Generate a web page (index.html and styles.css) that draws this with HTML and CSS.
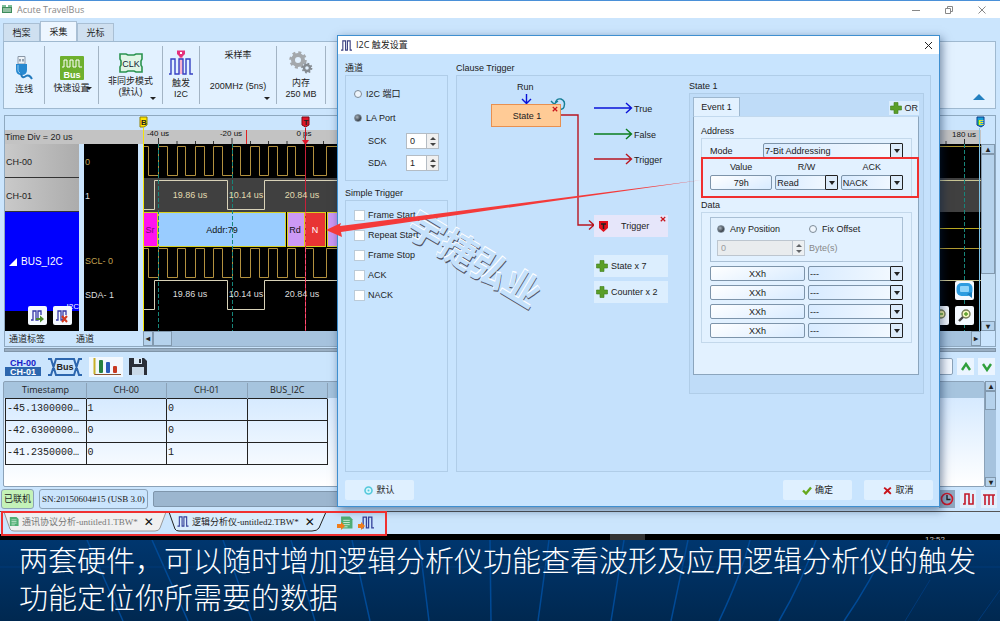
FILE: index.html
```
<!DOCTYPE html>
<html lang="zh-CN">
<head>
    <meta charset="UTF-8">
    <meta name="viewport" content="width=device-width, initial-scale=1.0">
    <link rel="stylesheet" href="styles.css">
    <title>Acute TravelBus</title>
</head>
<body>
    <!-- shared icon shapes -->
    <svg class="defs" width="0" height="0">
        <symbol id="pulse" viewBox="0 0 12 12"><path d="M0 11H2V1H5V11H7V1H10V11H12" fill="none" stroke="currentColor" stroke-width="1.2"/></symbol>
        <symbol id="plus" viewBox="0 0 12 12"><path d="M4 0.5H8V4H11.5V8H8V11.5H4V8H0.5V4H4Z" fill="#5a9e28" stroke="#3f7d1c" stroke-width="0.6"/></symbol>
        <symbol id="cross" viewBox="0 0 10 10"><path d="M2 1L5 3.6L8 1L9.4 2.4L6.6 5L9.4 8L8 9.4L5 6.6L2 9.4L0.6 8L3.4 5L0.6 2.4Z" fill="#c8141c"/></symbol>
        <symbol id="doc" viewBox="0 0 12 12"><path d="M1 0.5H9L11.5 3V11.5H1Z" fill="#4fae74"/><path d="M3 4H9M3 6H9M3 8H9M3 10H7" stroke="#d9f2e0" stroke-width="0.8"/></symbol>
    </svg>

    <div class="app">
        <header class="titlebar">
            <svg class="app-icon" width="12" height="9" viewBox="0 0 12 9"><rect x="1" y="2" width="10" height="6" fill="#3d8c5c"/><path d="M1 2V0H5V2M7 2V0H11V2" fill="#7fbf9a"/><path d="M2 4H10M2 6H10" stroke="#e6f5ea"/></svg>
            <span>Acute TravelBus</span>
            <div class="window-btns">
                <svg width="8" height="8"><path d="M0 4.5H8" stroke="#888"/></svg>
                <svg width="8" height="8" fill="none" stroke="#888"><path d="M0.5 2.5H5.5V7.5H0.5ZM2.5 2.5V0.5H7.5V5.5H5.5"/></svg>
                <svg width="8" height="8"><path d="M0.5 0.5L7.5 7.5M7.5 0.5L0.5 7.5" stroke="#888"/></svg>
            </div>
        </header>

        <nav class="ribbon-tabs">
            <button>档案</button>
            <button class="active">采集</button>
            <button>光标</button>
        </nav>
        <div class="ribbon">
            <button class="tool connect">
                <svg width="18" height="25" viewBox="0 0 18 25"><path d="M3 0.5H10V8H3Z" fill="#eef3f8" stroke="#8a98a8"/><path d="M5 3V5.5M8 3V5.5" stroke="#56697d" stroke-width="1.2"/><path d="M1 8H12V14Q12 19 6.5 19Q1 19 1 14Z" fill="#2688d0"/><path d="M3 9V14Q3 16 5 17" stroke="#93cbf1" fill="none"/><path d="M6 18Q7 23 11 20Q14 18 17 23" fill="none" stroke="#2279bd" stroke-width="2"/></svg>
                <span>连线</span>
            </button>
            <button class="tool quick drop">
                <svg width="24" height="24" viewBox="0 0 24 24"><rect width="24" height="24" rx="1" fill="#6eb02e"/><path d="M2 11H4V4H7V11H10V4H13V11H16V4H19V11H22" fill="none" stroke="#fff"/><text x="12" y="22" text-anchor="middle" font-size="9" font-weight="bold" fill="#fff">Bus</text></svg>
                <span>快速设置</span>
            </button>
            <button class="tool clock drop">
                <svg width="24" height="20" viewBox="0 0 24 20"><path d="M1 1H7L9 2H15L17 1H23V6L22 8V12L23 14V19H17L15 18H9L7 19H1V14L2 12V8L1 6Z" fill="#e0f5e6" stroke="#2b9350" stroke-width="1.6"/><text x="12" y="14" text-anchor="middle" font-size="9" fill="#123">CLK</text></svg>
                <span>非同步模式<br>(默认)</span>
            </button>
            <button class="tool trig">
                <svg width="24" height="25" viewBox="0 0 24 25"><rect x="10" y="6" width="4" height="18" fill="#f7b3cf"/><path d="M0 24H2V9H6V24H10V9H14V24H17V9H21V24H24" fill="none" stroke="#3742c4" stroke-width="1.4"/><path d="M8 0.5H16V4L12 8L8 4Z" fill="#e52f7b"/><rect x="11" y="2" width="2" height="2" fill="#fff"/></svg>
                <span>触发<br>I2C</span>
            </button>
            <button class="tool rate drop"><span>采样率</span><span>200MHz (5ns)</span></button>
            <button class="tool memory">
                <svg width="24" height="24" viewBox="0 0 24 24" fill="none"><circle cx="9" cy="9" r="5" stroke="#a4a8ac" stroke-width="4"/><circle cx="9" cy="9" r="7.5" stroke="#a4a8ac" stroke-width="2.5" stroke-dasharray="3 2.9"/><circle cx="18" cy="17" r="3" stroke="#858b91" stroke-width="2.4"/><circle cx="18" cy="17" r="4.6" stroke="#858b91" stroke-width="1.6" stroke-dasharray="1.8 1.8"/></svg>
                <span>内存<br>250 MB</span>
            </button>
            <button class="fold" aria-label="收起"></button>
        </div>

        <section class="wave">
            <div class="wave-side">
                <div class="time-div">Time Div = 20 us</div>
                <div class="channels">
                    <div class="names">
                        <div class="ch">CH-00</div>
                        <div class="ch">CH-01</div>
                        <div class="bus"><i></i>BUS_I2C<small>I2C</small></div>
                        <div class="name-btns">
                            <button aria-label="添加"><svg width="15" height="14" viewBox="0 0 15 14"><path d="M1 11H3V2H6V11H8V2H11V6" fill="none" stroke="#3638a8" stroke-width="1.3"/><path d="M6 9H10V6.500L14 10L10 13.500V11H6Z" fill="#4c8b2b"/></svg></button>
                            <button aria-label="删除"><svg width="15" height="14" viewBox="0 0 15 14"><path d="M1 11H3V2H6V11H8V2H11V6" fill="none" stroke="#3638a8" stroke-width="1.3"/><path d="M7 7L12 13M12 7L7 13" stroke="#d33a20" stroke-width="2"/></svg></button>
                        </div>
                    </div>
                    <div class="values">
                        <span class="gold">0</span>
                        <span>1</span>
                        <span></span>
                        <span class="scl">SCL- 0</span>
                        <span>SDA- 1</span>
                    </div>
                </div>
                <div class="side-foot"><span>通道标签</span><span>通道</span></div>
            </div>
            <div class="wave-main">
                <svg class="ruler" width="100%" height="28">
                    <rect y="14" width="100%" height="14" fill="#c3c3c3"/>
                    <path d="M15.500 22V28M34 25V28M52.500 25V28M70.500 25V28M89 22V28M107.500 25V28M125.500 25V28M144 25V28M162 22V28M180.500 25V28M803 25V28M821.500 23V28" stroke="#333"/>
                    <path d="M103.500 14V28" stroke="#e02020"/>
                    <g font-size="8" text-anchor="middle" fill="#111"><text x="15" y="20">-40 us</text><text x="88" y="20">-20 us</text><text x="161" y="20">0 ps</text><text x="821" y="21">180 us</text></g>
                </svg>
                <svg class="traces" width="100%" height="187">
                    <rect width="100%" height="187"/>
                    <rect y="34" width="100%" height="34" fill="#404040"/>
                    <path d="M190 2.500H1000M190 104.500H1000" stroke="#b09a32"/>
                    <path d="M190 36.500H1000M190 136.500H1000" stroke="#c9c594"/>
                    <path d="M190 84.500H1000" stroke="#b9a820"/>
                    <g fill="none" stroke="#b3913f">
                        <path id="scl" d="M0 2.500H5.500V31.500H15.500V2.500H24.500V31.500H34.500V2.500H42.500V31.500H52.500V2.500H61.500V31.500H70.500V2.500H79.500V31.500H89.500V2.500H97.500V31.500H107.500V2.500H116.500V31.500H125.500V2.500H134.500V31.500H144.500V2.500H152.500V31.500H162.500V2.500H170.500V31.500H183.500V2.500H192"/>
                        <use href="#scl" y="102"/>
                    </g>
                    <g fill="none" stroke="#d8d2b8">
                        <path id="sda" d="M0 65.500H11.500V36.500H84.500V65.500H121.500V36.500H200"/>
                        <use href="#sda" y="100"/>
                    </g>
                    <g stroke="#d8d020">
                        <rect x="0.500" y="68.500" width="14" height="34" fill="#ff12ee"/>
                        <rect x="15.500" y="68.500" width="127" height="34" fill="#99ccff"/>
                        <rect x="144.500" y="68.500" width="17" height="34" fill="#cc99f5"/>
                        <rect x="162.500" y="68.500" width="20" height="34" fill="#e83434"/>
                        <rect x="184.500" y="68.500" width="20" height="34" fill="#cc99f5"/>
                    </g>
                    <path d="M15.500 0V187M89.500 0V187M821.500 0V187" stroke="#17857a" stroke-dasharray="4 2"/>
                    <path d="M162.500 0V187" stroke="#c8203a"/>
                    <path d="M162.500 68V187" stroke="#ff4f75" stroke-dasharray="4 2"/>
                    <g font-size="9" text-anchor="middle" fill="#e2dcb0"><text x="47" y="54">19.86 us</text><text x="103" y="54">10.14 us</text><text x="159" y="54">20.84 us</text></g>
                    <g font-size="9" text-anchor="middle" fill="#ddd"><text x="47" y="153">19.86 us</text><text x="103" y="153">10.14 us</text><text x="159" y="153">20.84 us</text></g>
                    <g font-size="9" text-anchor="middle" fill="#111"><text x="7" y="89" fill="#7a0873">Sr</text><text x="79" y="89">Addr:79</text><text x="152" y="89">Rd</text><text x="172" y="89" fill="#fff">N</text></g>
                </svg>
                <!-- cursors drawn through ruler and traces -->
                <svg class="cursors" width="100%" height="215">
                    <path d="M0.500 12V215" stroke="#f5e50a"/>
                    <path d="M-3 1H4V9L1 11H-3Z" fill="#ffe600" stroke="#8f7f00"/>
                    <path d="M162.500 12V34" stroke="#d01020"/>
                    <path d="M159 1H166V9L162.500 11L159 9Z" fill="#e01428" stroke="#7c0a16"/>
                    <path d="M159 24H166L162.500 29Z" fill="#e01428"/>
                    <path d="M836.500 12V215" stroke="#7cc4e8"/>
                    <path d="M834 1H841V9L838 11L834 9Z" fill="#1aa0d8" stroke="#0b3a88"/>
                    <g font-size="8" font-weight="bold" text-anchor="middle" fill="#222"><text x="1" y="9">B</text><text x="163" y="9">T</text><text x="838" y="9" fill="#ee0">E</text></g>
                </svg>
                <div class="map-btns">
                    <button aria-label="平移"><svg width="17" height="17" viewBox="0 0 17 17"><rect x="0.500" y="1" width="16" height="13" rx="5" fill="#2d9ce0"/><rect x="4" y="4" width="9" height="6" rx="1" fill="#8fd4fa"/><path d="M11 12L16 16V10Z" fill="#187dbd"/></svg></button>
                    <div>
                        <button aria-label="缩小"><svg width="15" height="15" viewBox="0 0 15 15"><circle cx="9" cy="6" r="4" fill="#f7f3a0" stroke="#777c58" stroke-width="1.4"/><path d="M6 9L2 13" stroke="#555" stroke-width="2.4"/><path d="M7 6H11" stroke="#5a9e28" stroke-width="1.4"/></svg></button>
                        <button aria-label="放大"><svg width="15" height="15" viewBox="0 0 15 15"><circle cx="9" cy="6" r="4" fill="#f4f7c0" stroke="#777c58" stroke-width="1.4"/><path d="M6 9L2 13" stroke="#444" stroke-width="2.4"/><path d="M7 6H11M9 4V8" stroke="#5a9e28" stroke-width="1.4"/></svg></button>
                    </div>
                </div>
                <div class="h-scroll"><b>◂</b><i></i><b class="end">▸</b></div>
            </div>
            <div class="v-scroll wave-scroll"><b>▴</b><i></i><b>▾</b></div>
        </section>
        <div class="splitter"></div>

        <div class="toolbar">
            <button aria-label="CH-00 CH-01"><svg width="36" height="20"><text x="18" y="9" text-anchor="middle" font-size="9" font-weight="bold" fill="#1620c8">CH-00</text><rect y="10" width="36" height="9" fill="#2c66ae"/><text x="18" y="18" text-anchor="middle" font-size="9" font-weight="bold" fill="#fff">CH-01</text></svg></button>
            <button aria-label="Bus"><svg width="36" height="20"><path d="M1 2H4L9 18H27L32 2H35M1 18H4L9 2H27L32 18H35" fill="none" stroke="#2c66ae" stroke-width="2"/><text x="18" y="13" text-anchor="middle" font-size="9" font-weight="bold" fill="#222">Bus</text></svg></button>
            <button class="chart" aria-label="统计"><svg width="34" height="20"><path d="M5.500 1V17.500H32" fill="none" stroke="#8a5230"/><path d="M5.500 1V17" stroke="#c8b02a" stroke-width="2"/><rect x="10" y="3" width="4" height="13" rx="1" fill="#27823f"/><rect x="17" y="5" width="4" height="11" rx="1" fill="#2a5cb8"/><rect x="24" y="9" width="4" height="7" rx="1" fill="#c83a22"/></svg></button>
            <button aria-label="保存"><svg width="18" height="19"><path d="M0 1H15L18 4V18H0Z" fill="#2b2f38"/><rect x="5" y="1" width="8" height="6" fill="#d9e8f5"/><rect x="10" y="2" width="2" height="4" fill="#2b2f38"/><rect x="3" y="10" width="12" height="8" fill="#c9d9e8"/></svg></button>
            <div class="find">
                <input type="text" aria-label="搜索">
                <button class="step" aria-label="上一个"><svg width="12" height="10"><path d="M2 8L6 2L10 8" fill="none" stroke="#2fa03c" stroke-width="2.4"/></svg></button>
                <button class="step" aria-label="下一个"><svg width="12" height="10"><path d="M2 2L6 8L10 2" fill="none" stroke="#2fa03c" stroke-width="2.4"/></svg></button>
            </div>
        </div>

        <div class="report">
            <div class="report-box">
                <table>
                    <thead><tr><th>Timestamp</th><th>CH-00</th><th>CH-01</th><th>BUS_I2C</th></tr></thead>
                    <tbody>
                        <tr><td>-45.1300000…</td><td>1</td><td>0</td><td></td></tr>
                        <tr><td>-42.6300000…</td><td>0</td><td>0</td><td></td></tr>
                        <tr><td>-41.2350000…</td><td>0</td><td>1</td><td></td></tr>
                    </tbody>
                </table>
            </div>
            <div class="v-scroll report-scroll"><b>▴</b><i></i><b>▾</b></div>
        </div>

        <div class="status">
            <span class="online">已联机</span>
            <span class="serial">SN:20150604#15 (USB 3.0)</span>
            <span class="progress"></span>
            <button class="pressed" aria-label="时间"><svg width="14" height="14"><circle cx="7" cy="7" r="5.500" fill="none" stroke="#d01828" stroke-width="1.6"/><path d="M7 3V7.500H10.500" fill="none" stroke="#222" stroke-width="1.4"/></svg></button>
            <button aria-label="波形"><svg width="14" height="14"><path d="M2 12H4V2H8V12H12V2" fill="none" stroke="#c21a28" stroke-width="1.6"/></svg></button>
            <button aria-label="触发点"><svg width="14" height="14"><path d="M3 3V13M7 3V13M11 3V13M1 3H13" stroke="#c21a28" stroke-width="1.6"/></svg></button>
        </div>

        <div class="doc-tabs">
            <svg class="tab-shapes" width="400" height="22"><path d="M4 0L10 17Q11 19 14 19H155Q159 19 160 16L166 0" fill="#f0f0f0" stroke="#999"/><path d="M169 0L175 17Q176 19 179 19H312Q317 19 319 16L326 0" fill="#d9ecfc" stroke="#222"/></svg>
            <button class="doc-tab dim"><svg width="10" height="11"><use href="#doc"/></svg>通讯协议分析-untitled1.TBW*<b>✕</b></button>
            <button class="doc-tab"><svg width="12" height="11" color="#34409a"><use href="#pulse"/></svg>逻辑分析仪-untitled2.TBW*<b>✕</b></button>
            <button class="new-doc" aria-label="新建协议分析"><svg width="16" height="16"><svg x="3" y="1" width="13" height="13"><use href="#doc"/></svg><path d="M0 9H4V7L8 11L4 15V13H0Z" fill="#ef7d1b"/></svg></button>
            <button class="new-doc" aria-label="新建逻辑分析"><svg width="16" height="16" color="#34409a"><svg x="3" y="0" width="13" height="15"><use href="#pulse"/></svg><path d="M0 9H3V7L7 11L3 15V13H0Z" fill="#ef7d1b"/></svg></button>
        </div>
    </div>

    <div class="dialog" role="dialog" aria-label="I2C 触发设置">
        <div class="dialog-title">
            <svg width="11" height="11" color="#3a3f80"><use href="#pulse"/></svg>
            <span>I2C 触发设置</span>
            <button aria-label="关闭"><svg width="9" height="9"><path d="M1 1L8 8M8 1L1 8" stroke="#222"/></svg></button>
        </div>
        <div class="dialog-main">
            <div class="left-col">
                <h3>通道</h3>
                <div class="group port">
                    <label><input type="radio" name="port">I2C 端口</label>
                    <label><input type="radio" name="port" checked>LA Port</label>
                    <label class="pin">SCK<span class="spin"><input type="text" value="0"><i></i></span></label>
                    <label class="pin">SDA<span class="spin"><input type="text" value="1"><i></i></span></label>
                </div>
                <h3>Simple Trigger</h3>
                <div class="group simple">
                    <label><input type="checkbox">Frame Start</label>
                    <label><input type="checkbox">Repeat Start</label>
                    <label><input type="checkbox">Frame Stop</label>
                    <label><input type="checkbox">ACK</label>
                    <label><input type="checkbox">NACK</label>
                </div>
            </div>
            <div class="clause-col">
                <h3>Clause Trigger</h3>
                <div class="group clause">
                    <div class="canvas">
                        <svg class="flow" width="234" height="395" fill="none">
                            <path d="M69.500 18V27M65 23L69.500 27.500L74 23" stroke="#0a12d8" stroke-width="1.4"/>
                            <path d="M94 25L97 28L101 25M98 28Q99 22 104 23Q109 25 107 31Q106 34 103 33" stroke="#177f96" stroke-width="1.4"/>
                            <path d="M104 39H121V149H136M132 144.500L137 149L132 153.500" stroke="#b81620" stroke-width="1.4"/>
                            <path d="M137 32H174M169 27L174.500 32L169 37" stroke="#0a12d8" stroke-width="1.4"/>
                            <path d="M137 58H174M169 53L174.500 58L169 63" stroke="#0b7d1c" stroke-width="1.4"/>
                            <path d="M137 83H174M169 78L174.500 83L169 88" stroke="#b81620" stroke-width="1.4"/>
                            <g font-size="9" fill="#222"><text x="60" y="14">Run</text><text x="177" y="36">True</text><text x="177" y="62">False</text><text x="177" y="87">Trigger</text></g>
                        </svg>
                        <button class="node state">State 1<svg width="6" height="6"><use href="#cross"/></svg></button>
                        <button class="node end"><svg width="9" height="12"><path d="M0 1H9V8L4.500 12L0 8Z" fill="#e0101c"/><path d="M2 4H7M4.500 4V9" stroke="#222" stroke-width="1.5"/></svg>Trigger<svg class="close" width="6" height="6"><use href="#cross"/></svg></button>
                        <button class="node add-state"><svg width="12" height="12"><use href="#plus"/></svg>State x 7</button>
                        <button class="node add-counter"><svg width="12" height="12"><use href="#plus"/></svg>Counter x 2</button>
                    </div>
                    <div class="state-panel">
                        <h3>State 1</h3>
                        <div class="group events">
                            <div class="event-tabs">
                                <button class="event-tab">Event 1</button>
                                <button class="or"><svg width="12" height="12"><use href="#plus"/></svg>OR</button>
                            </div>
                            <div class="event">
                                <h3>Address</h3>
                                <div class="group address">
                                    <label class="mode">Mode<span class="select"><select><option>7-Bit Addressing</option></select></span></label>
                                    <div class="fields">
                                        <label>Value<input class="field" type="text" value="79h"></label>
                                        <label>R/W<span class="select"><select><option>Read</option></select></span></label>
                                        <label>ACK<span class="select"><select><option>NACK</option></select></span></label>
                                    </div>
                                </div>
                                <h3>Data</h3>
                                <div class="group data">
                                    <div class="position">
                                        <label><input type="radio" name="pos" checked>Any Position</label>
                                        <label><input type="radio" name="pos">Fix Offset</label>
                                        <span class="spin off"><input type="text" value="0" aria-label="Byte(s)" disabled><i></i></span>
                                        <span class="off">Byte(s)</span>
                                    </div>
                                    <div class="bytes">
                                        <input class="field" type="text" value="XXh" aria-label="Byte 1"><span class="select"><select aria-label="Byte 1"><option>---</option></select></span>
                                        <input class="field" type="text" value="XXh" aria-label="Byte 2"><span class="select"><select aria-label="Byte 2"><option>---</option></select></span>
                                        <input class="field" type="text" value="XXh" aria-label="Byte 3"><span class="select"><select aria-label="Byte 3"><option>---</option></select></span>
                                        <input class="field" type="text" value="XXh" aria-label="Byte 4"><span class="select"><select aria-label="Byte 4"><option>---</option></select></span>
                                    </div>
                                </div>
                            </div>
                        </div>
                    </div>
                </div>
            </div>
        </div>
        <div class="dialog-foot">
            <button><svg width="9" height="9"><circle cx="4.500" cy="4.500" r="3.500" fill="#d4f6fb" stroke="#55c8dc" stroke-width="1.6"/><circle cx="4.500" cy="4.500" r="1" fill="#55c8dc"/></svg>默认</button>
            <button class="ok"><svg width="10" height="9"><path d="M1 4.500L4 7.500L9 1.500" fill="none" stroke="#66a81e" stroke-width="2.4"/></svg>确定</button>
            <button><svg width="9" height="9"><use href="#cross"/></svg>取消</button>
        </div>
    </div>

    <div class="taskbar"><i></i><span>12:52</span></div>

    <div class="caption">
        <svg width="1000" height="81" fill="none" stroke="#004a96" stroke-width="1.5">
            <path d="M87 0L123 81M152 0L188 81M223 0L252 81M291 0L315 81M352 0L370 81M419 0L429 81M490 0L491 81M549 0L538 81M624 0L611 81M688 0L671 81M750 0Q741 35 719 81M816 0Q803 40 779 81M890 0Q872 40 844 81"/>
            <path d="M930 40L905 81M1000 50L978 81M0 27H1000" stroke="#003a78" stroke-width="1"/>
        </svg>
        <p>两套硬件，可以随时增加逻辑分析仪功能查看波形及应用逻辑分析仪的触发<br>功能定位你所需要的数据</p>
    </div>

    <!-- callouts on top of everything -->
    <svg class="notes" width="1000" height="621">
        <g fill="none" stroke="#f03030" stroke-width="2"><rect x="702" y="158" width="216" height="39"/><rect x="2" y="512" width="384" height="23"/></g>
        <text class="stamp" x="474" y="273" transform="rotate(31 474 260)">宇捷弘业</text>
        <path d="M702 180L340 226L341 223L326 230L342 237L341 232L540 203Z" fill="#f43a3a"/>
    </svg>
</body>
</html>
```
FILE: styles.css
```
*, *::before, *::after{
    box-sizing: border-box;
}

body{
    margin: 0;
    min-height: 100vh;
    display: flex;
    flex-direction: column;
    position: relative;
    overflow: hidden;
    font-family: "Liberation Sans", "Noto Sans CJK SC", sans-serif;
    font-size: 9px;
    line-height: 12px;
    color: #222;
    background-color: #002a56;
}

button, input, select{
    font: inherit;
    color: inherit;
    margin: 0;
    padding: 0;
    border: none;
    background: none;
}

svg{
    display: block;
    flex: none;
}

.defs{
    position: absolute;
}

h3{
    margin: 0;
    font-size: 9px;
    font-weight: normal;
    line-height: 12px;
}

/* main window */
.app{
    display: flex;
    flex-direction: column;
    background-color: #cbe5fd;
    border-top: 1px solid #4a90d8;
}

.titlebar{
    height: 17px;
    display: flex;
    align-items: center;
    gap: 4px;
    padding-left: 1px;
    background-color: #fff;
    color: #888;
    font-family: "Open Sans", sans-serif;
}

.window-btns{
    margin-left: auto;
    display: flex;
    gap: 25px;
    padding-right: 14px;
}

.ribbon-tabs{
    display: flex;
    align-items: flex-end;
    height: 23px;
    padding-left: 3px;
}

.ribbon-tabs button{
    width: 37px;
    height: 18px;
    border: 1px solid #a9bfd4;
    border-bottom: none;
    background-color: #cfe0f0;
}

.ribbon-tabs .active{
    height: 20px;
    background-color: #edf6ff;
}

.ribbon{
    display: flex;
    height: 68px;
    margin: 0 4px 0 3px;
    padding: 4px 0;
    border: 1px solid #9fb9d0;
    background-color: #e2f1ff;
}

.tool{
    position: relative;
    display: flex;
    flex-direction: column;
    align-items: center;
    justify-content: center;
    gap: 3px;
    border-right: 1px solid #a3b4c4;
    line-height: 11px;
}

.connect{ width: 41px; }
.quick{ width: 54px; }
.clock{ width: 64px; }
.trig{ width: 37px; }
.rate{ width: 77px; gap: 20px; padding-bottom: 8px; }
.memory{ width: 49px; }

.drop::after, .fold::after{
    content: "";
    position: absolute;
    right: 6px;
    bottom: 4px;
    border: 3px solid transparent;
    border-top-color: #222;
    border-bottom: none;
}

.quick::after{
    bottom: 14px;
}

.fold{
    position: relative;
    width: 24px;
    margin-left: auto;
}

.fold::after{
    border: 6px solid transparent;
    border-bottom-color: #2380c0;
    border-top: none;
    right: 10px;
}

/* waveform */
.wave{
    display: flex;
    margin: 6px 4px 0;
    border: 1px solid #8fa9c0;
}

.wave-side{
    width: 138px;
    padding-top: 14px;
}

.time-div{
    height: 14px;
    line-height: 15px;
    background-color: #c3c3c3;
}

.channels{
    display: flex;
    gap: 5px;
    height: 187px;
}

.names{
    width: 74px;
    position: relative;
    background-color: #000;
}

.ch{
    height: 34px;
    line-height: 36px;
    padding-left: 1px;
    border-bottom: 1px solid #333;
    background: linear-gradient(90deg, #c9c9c9, #acacac);
}

.bus{
    height: 99px;
    display: flex;
    align-items: center;
    gap: 4px;
    padding-left: 4px;
    position: relative;
    background-color: #0000fe;
    color: #fff;
    font-size: 10px;
}

.bus i{
    border: 4px solid transparent;
    border-right-color: #fff;
    border-bottom-color: #fff;
}

.bus small{
    position: absolute;
    right: 0;
    bottom: 0;
    font-size: 8px;
    line-height: 9px;
}

.name-btns{
    position: absolute;
    left: 23px;
    bottom: 6px;
    display: flex;
    gap: 6px;
}

.name-btns button, .map-btns button{
    width: 19px;
    height: 19px;
    display: flex;
    align-items: center;
    justify-content: center;
    border-radius: 2px;
    background-color: #f4f9ff;
}

.values{
    width: 54px;
    padding-left: 1px;
    background-color: #000;
    color: #ddd;
}

.values span{
    display: block;
    height: 34px;
    line-height: 36px;
}

.values .gold, .values .scl{
    color: #c0a050;
}

.values .scl{
    height: 31px;
    line-height: 31px;
}

.side-foot{
    height: 15px;
    display: flex;
    padding-left: 4px;
    line-height: 16px;
}

.side-foot span{
    width: 78px;
}

.wave-main{
    flex: 1;
    min-width: 0;
    position: relative;
}

.cursors{
    position: absolute;
    top: 0;
    left: 0;
    overflow: visible;
}

.map-btns{
    position: absolute;
    right: 7px;
    bottom: 21px;
    display: flex;
    flex-direction: column;
    align-items: flex-end;
    gap: 6px;
}

.map-btns div{
    display: flex;
    gap: 6px;
}

.h-scroll{
    height: 15px;
    display: flex;
    background-color: #a6c3de;
}

.h-scroll b, .h-scroll i, .v-scroll b, .v-scroll i{
    border: 1px solid #8299ae;
    background-color: #b5d2ec;
    font-size: 8px;
    line-height: 9px;
    text-align: center;
}

.h-scroll b{
    width: 10px;
    line-height: 13px;
}

.h-scroll i{
    width: 19px;
}

.h-scroll .end{
    margin-left: auto;
}

.v-scroll{
    width: 14px;
    display: flex;
    flex-direction: column;
    background-color: #c4def4;
}

.v-scroll b{
    height: 10px;
}

.v-scroll b:last-child{
    margin-top: auto;
}

.wave-scroll{
    margin: 28px 0 15px;
}

.wave-scroll i{
    height: 120px;
}

.splitter{
    height: 4px;
    margin: 1px 4px 0;
    background-color: #9aafc3;
    border: 1px solid #8095a8;
}

.toolbar{
    display: flex;
    align-items: center;
    gap: 6px;
    height: 29px;
    padding: 0 5px;
}

.chart{
    background-color: #f2f8fe;
}

.find{
    display: flex;
    gap: 4px;
    margin-left: auto;
}

.find input{
    width: 200px;
    height: 17px;
    border: 1px solid #8ba2b8;
    border-radius: 2px;
    background-color: #f2f8ff;
}

.step{
    width: 17px;
    height: 17px;
    display: flex;
    align-items: center;
    justify-content: center;
    background-color: #ebf5ff;
}

.report{
    display: flex;
    height: 106px;
    margin: 0 4px 0 3px;
}

.report-box{
    flex: 1;
    border: 1px solid #8ba2b8;
    border-radius: 2px;
    padding: 1px;
    background: linear-gradient(#a6c4de 16px, #d6eaff 16px, #fff);
}

.report-box table{
    width: 323px;
    border-collapse: collapse;
    table-layout: fixed;
}

th{
    height: 15px;
    padding: 0;
    font-weight: normal;
    font-family: "Open Sans", sans-serif;
    border-right: 1px solid #8ba2b8;
}

td{
    height: 22px;
    padding: 0 1px;
    border: 1px solid #222;
    font: 10px/12px "Liberation Mono", monospace;
}

.report-scroll{
    width: 11px;
    background-color: #a6c3de;
}

.report-scroll i{
    height: 19px;
}

.status{
    display: flex;
    align-items: center;
    gap: 5px;
    height: 25px;
    padding: 0 3px 0 1px;
    border-bottom: 1px solid #555;
}

.online, .serial{
    height: 20px;
    padding: 0 2px;
    border: 1px solid #8ba2b8;
    border-radius: 3px;
    line-height: 18px;
    font-family: "Liberation Serif", "Noto Sans CJK SC", serif;
}

.online{
    background-color: #c4f2b8;
}

.progress{
    flex: 1;
    height: 16px;
    border: 1px solid #7f96ac;
    border-radius: 2px;
    background-color: #9cb6cf;
}

.status button{
    width: 16px;
    height: 18px;
    display: flex;
    align-items: center;
    justify-content: center;
    background-color: #e2f0fc;
}

.status .pressed{
    background-color: #8fa8c0;
}

.doc-tabs{
    display: flex;
    height: 22px;
    padding-left: 9px;
    position: relative;
    font-family: "Liberation Serif", "Noto Sans CJK SC", serif;
}

.tab-shapes{
    position: absolute;
    left: 0;
    top: 0;
}

.doc-tab{
    position: relative;
    width: 168px;
    height: 19px;
    display: flex;
    align-items: center;
    gap: 3px;
    white-space: nowrap;
}

.doc-tab b{
    margin-left: 3px;
    font: bold 12px/12px "DejaVu Sans", sans-serif;
    color: #111;
}

.dim{
    color: #777;
}

.new-doc{
    width: 21px;
}

.new-doc:nth-last-child(2){
    margin-left: -8px;
}

/* trigger dialog */
.dialog{
    position: absolute;
    left: 337px;
    top: 35px;
    width: 603px;
    height: 472px;
    display: flex;
    flex-direction: column;
    border: 1px solid #3f8fd0;
    background-color: #c8e4fe;
    box-shadow: 2px 3px 9px rgba(0, 30, 70, 0.5);
}

.dialog-title{
    height: 18px;
    display: flex;
    align-items: center;
    gap: 4px;
    padding: 0 6px 0 3px;
    background-color: #fff;
    font-family: "Open Sans", "Noto Sans CJK SC", sans-serif;
}

.dialog-title button{
    margin-left: auto;
}

.dialog-main{
    flex: 1;
    display: flex;
    gap: 8px;
    padding: 8px 8px 0 7px;
}

.left-col{
    width: 103px;
    display: flex;
    flex-direction: column;
}

.clause-col{
    flex: 1;
    display: flex;
    flex-direction: column;
}

.group{
    margin-top: 1px;
    border: 1px solid #b0cde8;
}

.group label{
    display: flex;
    align-items: center;
}

.port{
    padding: 6px 8px;
    margin-bottom: 6px;
}

.port label{
    height: 24px;
    gap: 4px;
}

.port .pin{
    height: 22px;
    padding-left: 14px;
    justify-content: space-between;
}

.simple{
    flex: 1;
    padding: 4px 8px;
}

.simple label{
    height: 20px;
    gap: 3px;
}

input[type="radio"]{
    appearance: none;
    width: 8px;
    height: 8px;
    border: 1px solid #7d8b98;
    border-radius: 50%;
    background-color: #eef5fc;
}

input[type="radio"]:checked{
    background: radial-gradient(circle at 35% 35%, #aab4bd, #333b44 70%);
}

input[type="checkbox"]{
    appearance: none;
    width: 11px;
    height: 11px;
    border: 1px solid #bccbd8;
    background-color: #fff;
}

.spin{
    position: relative;
    width: 33px;
    height: 16px;
    display: flex;
    border: 1px solid #b4bcc4;
    background-color: #fff;
}

.spin input{
    width: 100%;
    padding-left: 3px;
}

.spin i{
    width: 12px;
    flex: none;
    border-left: 1px solid #b4bcc4;
    background-color: #f0f0f0;
}

.spin i::before, .spin i::after{
    content: "";
    position: absolute;
    right: 2px;
    top: 3px;
    border: 3px solid transparent;
    border-bottom-color: #444;
    border-top: none;
}

.spin i::after{
    top: 9px;
    border-top: 3px solid #444;
    border-bottom: none;
}

.off{
    color: #888;
}

.spin.off{
    background-color: #ebebeb;
    opacity: 0.8;
}

.clause{
    flex: 1;
    display: flex;
    padding-right: 6px;
    background-color: #c5e1fc;
}

.canvas{
    flex: 1;
    position: relative;
}

.flow{
    position: absolute;
}

.node{
    position: absolute;
    left: 137px;
    width: 74px;
    height: 22px;
    display: flex;
    align-items: center;
    gap: 3px;
    padding-left: 2px;
    background-color: #dceefe;
}

.state{
    left: 34px;
    top: 28px;
    width: 70px;
    height: 23px;
    justify-content: center;
    border: 1px solid #e89050;
    background-color: #ffcb96;
}

.state svg, .node .close{
    position: absolute;
    top: 1px;
    right: 2px;
}

.end.node{
    top: 139px;
    gap: 13px;
    padding-left: 5px;
    background-color: #e6e6fa;
}

.add-state{
    top: 179px;
}

.add-counter{
    top: 205px;
}

.state-panel{
    width: 235px;
    padding-top: 4px;
}

.events{
    height: 301px;
    padding: 3px 4px 0 3px;
    background-color: #bfdcf8;
}

.event-tabs{
    display: flex;
    align-items: flex-end;
    justify-content: space-between;
    height: 19px;
}

.event-tab{
    width: 47px;
    height: 19px;
    border: 1px solid #9db7cf;
    border-bottom: none;
    background-color: #e2f1ff;
}

.or{
    display: flex;
    align-items: center;
    gap: 3px;
    margin-bottom: 1px;
    padding: 1px;
    background-color: #dbedfd;
}

.event{
    height: 259px;
    padding: 8px 6px 0 7px;
    border: 1px solid #8ba5bd;
    border-top-color: #c2d9ee;
    background-color: #e2f1ff;
}

.address, .data{
    border-color: #c3d8eb;
    padding: 4px 8px 0;
}

.address{
    height: 59px;
    margin-bottom: 2px;
}

.mode{
    justify-content: space-between;
}

.mode .select{
    width: 140px;
}

.select{
    position: relative;
    display: flex;
    height: 15px;
    border: 1px solid #7d94aa;
    border-radius: 2px;
    background: linear-gradient(90deg, #d8ebff, #f5faff);
}

.select select{
    appearance: none;
    width: 100%;
    padding-left: 1px;
}

.select::before{
    content: "";
    position: absolute;
    right: -1px;
    top: -1px;
    width: 13px;
    height: 15px;
    border: 1px solid #222;
    border-radius: 1px;
    background-color: #dcebfa;
    pointer-events: none;
}

.select::after{
    content: "";
    position: absolute;
    right: 2px;
    top: 5px;
    border: 3px solid transparent;
    border-top: 4px solid #222;
    border-bottom: none;
    pointer-events: none;
}

.field{
    width: 100%;
    height: 15px;
    border: 1px solid #7d94aa;
    border-radius: 2px;
    background: linear-gradient(160deg, #fff, #d8ebff);
    text-align: center;
}

.fields{
    display: flex;
    gap: 3px;
    padding-top: 3px;
}

.fields label{
    flex: 1;
    flex-direction: column;
    gap: 2px;
}

.fields .select{
    width: 100%;
}

.data{
    height: 131px;
}

.position{
    height: 45px;
    display: grid;
    grid-template-columns: 88px 1fr;
    column-gap: 4px;
    align-items: center;
    padding: 2px 6px;
    border: 1px solid #a9bfd4;
}

.position label{
    gap: 5px;
}

.position .spin{
    width: 88px;
}

.bytes{
    display: grid;
    grid-template-columns: 1fr 1fr;
    gap: 4px 3px;
    margin-top: 4px;
}

.dialog-foot{
    display: flex;
    gap: 12px;
    padding: 8px 6px 6px 7px;
}

.dialog-foot button{
    width: 69px;
    height: 20px;
    display: flex;
    align-items: center;
    justify-content: center;
    gap: 3px;
    background-color: #dff0ff;
    border-radius: 2px;
}

.dialog-foot .ok{
    margin-left: auto;
}

/* bottom of the slide */
.taskbar{
    height: 6px;
    display: flex;
    overflow: hidden;
    background-color: #000;
    color: #ccc;
    font-size: 8px;
    line-height: 12px;
}

.taskbar i{
    width: 35px;
    margin-left: 61%;
    background-color: #333;
}

.taskbar span{
    margin-left: auto;
    padding-right: 55px;
}

.caption{
    flex: 1;
    position: relative;
    background: linear-gradient(#00366e, #002850);
}

.caption svg{
    position: absolute;
}

.caption p{
    position: relative;
    margin: 0;
    padding: 1px 0 0 19px;
    font: 300 29px/37px "Noto Sans CJK SC", sans-serif;
    color: #fff;
    white-space: nowrap;
}

.notes{
    position: absolute;
    top: 0;
    left: 0;
    pointer-events: none;
}

.stamp{
    font: bold 37px "Noto Sans CJK SC", sans-serif;
    text-anchor: middle;
    fill: #c5e1fb;
    text-shadow: -1px -1px 0 #fff, 1px 1px 0 #556;
}
```
